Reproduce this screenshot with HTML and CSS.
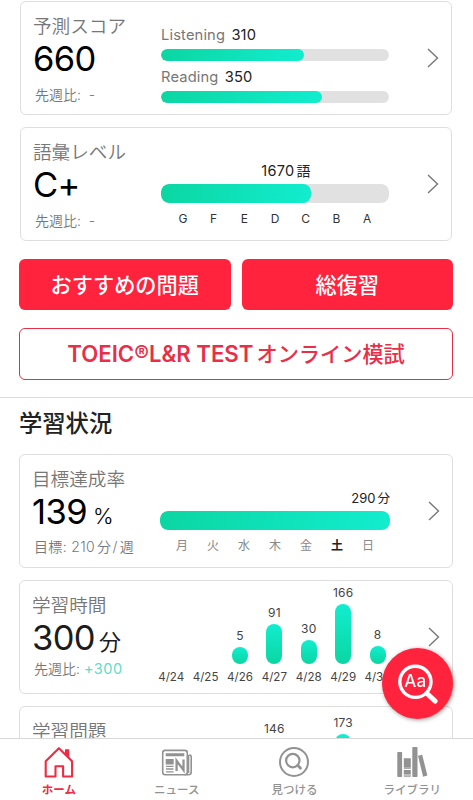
FILE: index.html
```
<!DOCTYPE html>
<html lang="ja">
<head>
<meta charset="utf-8">
<title>ホーム</title>
<link rel="stylesheet" href="styles.css">
</head>
<body>
<main class="page">
  <section class="scores">
    <article class="card">
      <div class="summary">
        <h3 class="label">予測スコア</h3>
        <p class="value">660</p>
        <p class="note">先週比:&nbsp; -</p>
      </div>
      <div class="chart skills">
        <p class="skill">Listening <b>310</b></p>
        <div class="track"><div class="fill" style="width:62.6%"></div></div>
        <p class="skill second">Reading <b>350</b></p>
        <div class="track"><div class="fill" style="width:70.7%"></div></div>
      </div>
      <svg class="chevron" viewBox="0 0 12 20"><path d="M1 1l9.5 9L1 19"/></svg>
    </article>
    <article class="card">
      <div class="summary">
        <h3 class="label">語彙レベル</h3>
        <p class="value">C+</p>
        <p class="note">先週比:&nbsp; -</p>
      </div>
      <div class="chart level">
        <p class="mark words" style="width:65.6%">1670<span class="unit">語</span></p>
        <div class="track thick"><div class="fill" style="width:65.8%"></div></div>
        <div class="scale grades"><span>G</span><span>F</span><span>E</span><span>D</span><span>C</span><span>B</span><span>A</span></div>
      </div>
      <svg class="chevron" viewBox="0 0 12 20"><path d="M1 1l9.5 9L1 19"/></svg>
    </article>
  </section>

  <section class="actions">
    <button class="btn">おすすめの問題</button>
    <button class="btn">総復習</button>
    <button class="btn outline"><span class="latin">TOEIC®L&amp;R TEST</span><span>オンライン模試</span></button>
  </section>

  <section class="status">
    <h2 class="heading">学習状況</h2>
    <article class="card">
      <div class="summary">
        <h3 class="label">目標達成率</h3>
        <p class="value">139<small class="percent">%</small></p>
        <p class="note goal">目標: 210<span class="unit">分</span>/<span class="unit">週</span></p>
      </div>
      <div class="chart level">
        <p class="mark">290<span class="unit">分</span></p>
        <div class="track thick"><div class="fill" style="width:100%"></div></div>
        <div class="scale days"><span>月</span><span>火</span><span>水</span><span>木</span><span>金</span><span class="today">土</span><span>日</span></div>
      </div>
      <svg class="chevron" viewBox="0 0 12 20"><path d="M1 1l9.5 9L1 19"/></svg>
    </article>
    <article class="card">
      <div class="summary">
        <h3 class="label">学習時間</h3>
        <p class="value dark">300<small>分</small></p>
        <p class="note tight">先週比: <em>+300</em></p>
      </div>
      <div class="chart columns">
        <div class="col"><span>4/24</span></div>
        <div class="col"><span>4/25</span></div>
        <div class="col"><b>5</b><i style="height:17px"></i><span>4/26</span></div>
        <div class="col"><b>91</b><i style="height:40px"></i><span>4/27</span></div>
        <div class="col"><b>30</b><i style="height:24px"></i><span>4/28</span></div>
        <div class="col"><b>166</b><i style="height:60px"></i><span>4/29</span></div>
        <div class="col"><b>8</b><i style="height:18px"></i><span>4/30</span></div>
      </div>
      <svg class="chevron" viewBox="0 0 12 20"><path d="M1 1l9.5 9L1 19"/></svg>
    </article>
    <article class="card">
      <div class="summary">
        <h3 class="label">学習問題</h3>
      </div>
      <div class="chart columns">
        <div class="col"></div>
        <div class="col"></div>
        <div class="col"></div>
        <div class="col"><b>146</b><i style="height:50px"></i><span></span></div>
        <div class="col"></div>
        <div class="col"><b>173</b><i style="height:56px"></i><span></span></div>
        <div class="col"></div>
      </div>
    </article>
  </section>
</main>

<button class="fab">
  <svg viewBox="0 0 71 71">
    <circle cx="33.4" cy="33.8" r="15.6" fill="none" stroke="#fff" stroke-width="3.4"/>
    <path d="M45 45.5l8.2 7.6" stroke="#fff" stroke-width="5" stroke-linecap="round"/>
    <text x="33.2" y="39" text-anchor="middle" class="fab-text">Aa</text>
  </svg>
</button>

<nav class="tabs">
  <a class="tab active">
    <svg viewBox="0 0 32 32"><path d="M2.7 15.2L15.9 2.2l13.2 13v15.3h-9V20.3h-7.6v10.2H2.7z" fill="none" stroke="currentColor" stroke-width="2.1" stroke-linejoin="round"/><path d="M22 3.3h4.3v9.5L22 8.5z" fill="currentColor"/></svg>
    <span>ホーム</span>
  </a>
  <a class="tab">
    <svg viewBox="0 0 32 32"><g fill="none" stroke="currentColor" stroke-width="1.6"><rect x="1.7" y="4.4" width="24.6" height="24.4" rx="2.5"/><path d="M28.2 9h.4q1.6 0 1.6 1.6V26q0 2.8-2.8 2.8h-3.9M27.5 9v18"/><path d="M5 20.3h7.5M5 23h7.5M5 25.8h7.5" stroke-width="1.3"/><path d="M15.6 25V14.8L22.5 24V13.5" stroke-width="2.3"/></g><path d="M4.7 7.3h18.6v3H4.7zM4.7 13h8v5.4h-8z" fill="currentColor"/></svg>
    <span>ニュース</span>
  </a>
  <a class="tab">
    <svg viewBox="0 0 32 32"><g fill="none" stroke="currentColor"><circle cx="16" cy="16" r="14" stroke-width="2"/><circle cx="14.8" cy="14.6" r="6.7" stroke-width="2.2"/><path d="M19.7 19.2l2.8 3" stroke-width="2.8" stroke-linecap="round"/></g></svg>
    <span>見つける</span>
  </a>
  <a class="tab">
    <svg viewBox="0 0 32 32"><g fill="currentColor"><rect x="1.3" y="6" width="4.8" height="25" rx=".7"/><path d="M7.8 12.2h7v9.5h-7zM7.8 24h7v4.5h-7zM7.8 22.3h7v.8h-7z"/><path d="M8.3 29.2h6v1.4h-6z" fill="none" stroke="currentColor" stroke-width=".8"/><rect x="16.3" y="1" width="5.2" height="30" rx=".7"/><path d="M22 9.8l4.2-1 5.2 20.7-4.3 1.3z"/></g></svg>
    <span>ライブラリ</span>
  </a>
</nav>
</body>
</html>
```
FILE: styles.css
```
* { box-sizing: border-box; }

html, body { height: 100%; }

body {
  margin: 0;
  overflow: hidden;
  background: #fff;
  color: #222;
  font-family: Inter, "Noto Sans CJK JP", sans-serif;
}

h2, h3, p { margin: 0; font-weight: 400; }
button { border: 0; padding: 0; font-family: inherit; }
.page { height: 800px; overflow: hidden; }

.scores {
  display: flex;
  flex-direction: column;
  gap: 12px;
  padding: 1px 21px 0 20px;
}

.card {
  display: grid;
  grid-template-columns: 127px 228px 1fr;
  height: 114px;
  padding: 0 12px 0 13px;
  border: 1px solid #dedede;
  border-radius: 6px;
  background: #fff;
}

.summary { padding-top: 12px; margin-left: -1px; white-space: nowrap; }
.label { height: 24px; font-size: 18.6px; line-height: 24px; font-weight: 350; color: #777; }
.value { height: 40px; margin-top: 1px; font-size: 34.5px; line-height: 40px; letter-spacing: -.6px; color: #000; }
.value small { margin-left: 4px; font-size: 22px; letter-spacing: 0; }
.value .percent { margin-left: 6px; font-weight: 300; }
.value.dark { color: #1c1c1c; }
.note { height: 20px; margin: 6px 0 0 2px; font-size: 14px; line-height: 20px; font-weight: 350; color: #777; }
.note em { font-style: normal; font-weight: 400; font-size: 14.5px; color: #5fdcc3; letter-spacing: .5px; }
.goal { letter-spacing: .35px; }
.unit { margin: 0 1px 0 2px; }

.track { height: 12px; border-radius: 6px; background: #e1e1e1; overflow: hidden; }
.track.thick { height: 19px; border-radius: 8px; }
.fill { height: 100%; border-radius: inherit; background: linear-gradient(100deg, #0bd6a2, #12edcf); }

.skills { padding-top: 23px; }
.skill { height: 20px; margin-bottom: 4px; font-size: 14.7px; letter-spacing: .15px; line-height: 20px; color: #777; }
.skill.second { margin-top: 6px; }
.skill b { margin-left: 2px; font-weight: 400; color: #222; }

.level { padding-top: 33px; }
.mark { height: 20px; margin-bottom: 3px; font-size: 13px; line-height: 20px; text-align: right; color: #222; }
.mark .unit { margin-right: 0; font-size: 12.5px; }
.words { font-size: 14.5px; letter-spacing: .3px; }
.words .unit { font-size: 14px; letter-spacing: 0; }
.scale { display: grid; grid-template-columns: repeat(7, 1fr); margin-top: 7px; padding: 0 6.5px; font-size: 12px; line-height: 18px; text-align: center; color: #333; }
.days { color: #888; }
.today { font-weight: 700; color: #222; }

.chevron { width: 12px; height: 20px; margin: 46px 0 0 auto; fill: none; stroke: #777; stroke-width: 1.4; }

.actions {
  display: grid;
  grid-template-columns: 1fr 1fr;
  gap: 18px 11px;
  padding: 18px 20px 17px 19px;
  border-bottom: 1px solid #ddd;
}
.btn { height: 51px; padding-bottom: 3px; border-radius: 6px; background: #ff233d; color: #fff; font-size: 21.2px; font-weight: 500; }
.outline { grid-column: 1 / -1; height: 52px; border: 1px solid #e52e48; background: #fff; color: #e92f48; }
.latin { margin-right: 3px; font-size: 22.2px; font-weight: 600; }

.status { padding: 0 20px 0 19px; }
.heading { height: 56px; font-size: 23.3px; line-height: 51px; font-weight: 500; }
.status .card { height: 114px; margin-bottom: 12px; grid-template-columns: 128px 230px 1fr; padding: 0 12px; }
.status .summary { margin-left: 0; }
.status .value { margin-top: 1px; }
.status .note { margin-top: 5px; }
.status .note.tight { margin-top: 1px; }

.columns { display: grid; grid-template-columns: repeat(7, 34.4px); margin-left: -6px; height: 104px; }
.col { display: flex; flex-direction: column; align-items: center; justify-content: flex-end; color: #444; font-size: 12px; }
.col b { margin-bottom: 3px; font-weight: 400; line-height: 16px; letter-spacing: .2px; }
.col i { width: 16px; border-radius: 8px; background: linear-gradient(#12edcf, #0bd6a2); }
.col span { height: 16px; margin-top: 5px; font-size: 11.6px; line-height: 16px; }

.fab { position: fixed; left: 382px; top: 648px; width: 71px; height: 71px; border-radius: 50%; background: #ff233d; box-shadow: 1px 1px 4px #0006; }
.fab svg { display: block; width: 71px; height: 71px; }
.fab-text { font: 500 17px Inter, sans-serif; fill: #fff; }

.tabs {
  position: fixed;
  left: 0;
  right: 0;
  bottom: 0;
  display: grid;
  grid-template-columns: repeat(4, 117.8px);
  height: 62px;
  border-top: 1px solid #d8d8d8;
  background: #fff;
}
.tab { display: flex; flex-direction: column; align-items: center; padding-top: 7px; font-size: 11.5px; line-height: 16px; font-weight: 500; color: #929292; }
.tab svg { width: 32px; height: 32px; margin-bottom: 4px; }
.tab.active { color: #ef2a43; font-weight: 700; }
```
